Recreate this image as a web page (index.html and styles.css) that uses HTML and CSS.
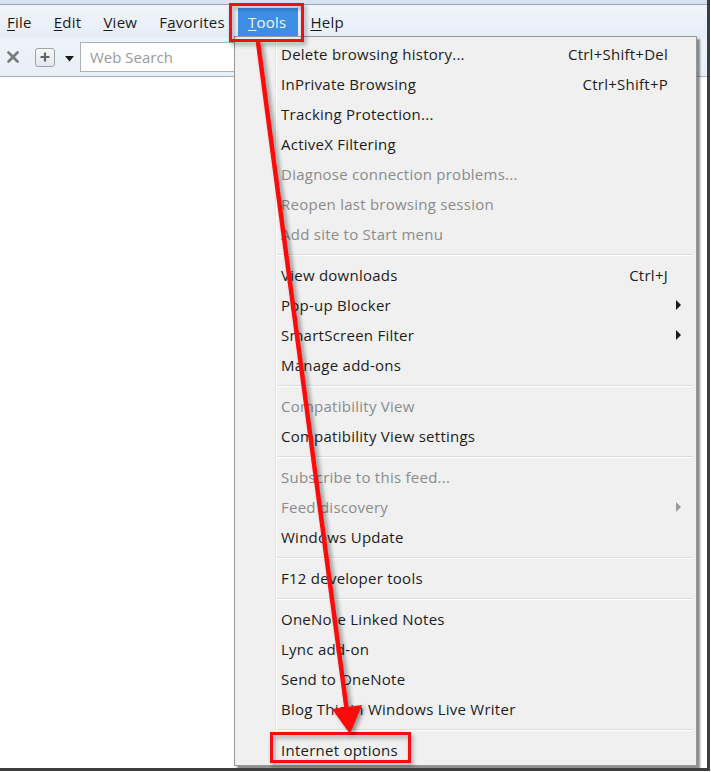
FILE: index.html
```html
<!DOCTYPE html>
<html lang="en">
<head>
<meta charset="utf-8">
<title>Tools menu</title>
<link rel="stylesheet" href="styles.css">
</head>
<body>
<div class="frame">
  <div class="topstrip"></div>
  <div class="menubar">
    <span class="mb-item"><u>F</u>ile</span>
    <span class="mb-item"><u>E</u>dit</span>
    <span class="mb-item"><u>V</u>iew</span>
    <span class="mb-item">F<u>a</u>vorites</span>
    <span class="mb-item active"><u>T</u>ools</span>
    <span class="mb-item"><u>H</u>elp</span>
  </div>
  <div class="toolbar">
    <svg class="tb-x" width="12" height="12" viewBox="0 0 12 12"><path d="M1.5 1.5 L10.5 10.5 M10.5 1.5 L1.5 10.5" stroke="#7a7a7a" stroke-width="2.6" stroke-linecap="round"/></svg>
    <span class="tb-plus"><svg width="12" height="12" viewBox="0 0 12 12"><path d="M6 1.5 V10.5 M1.5 6 H10.5" stroke="#5f6670" stroke-width="2.2"/></svg></span>
    <svg class="tb-drop" width="9" height="6" viewBox="0 0 9 6"><path d="M0 0 H9 L4.5 5.5 Z" fill="#1b1b1b"/></svg>
    <div class="search">Web Search</div>
  </div>
  <div class="content"></div>

  <div class="popup">
    <div class="mi"><span>Delete browsing history...</span><span class="sc">Ctrl+Shift+Del</span></div>
    <div class="mi"><span>InPrivate Browsing</span><span class="sc">Ctrl+Shift+P</span></div>
    <div class="mi"><span>Tracking Protection...</span></div>
    <div class="mi"><span>ActiveX Filtering</span></div>
    <div class="mi dis"><span>Diagnose connection problems...</span></div>
    <div class="mi dis"><span>Reopen last browsing session</span></div>
    <div class="mi dis"><span>Add site to Start menu</span></div>
    <div class="sep"></div>
    <div class="mi"><span>View downloads</span><span class="sc">Ctrl+J</span></div>
    <div class="mi sub"><span>Pop-up Blocker</span></div>
    <div class="mi sub"><span>SmartScreen Filter</span></div>
    <div class="mi"><span>Manage add-ons</span></div>
    <div class="sep"></div>
    <div class="mi dis"><span>Compatibility View</span></div>
    <div class="mi"><span>Compatibility View settings</span></div>
    <div class="sep"></div>
    <div class="mi dis"><span>Subscribe to this feed...</span></div>
    <div class="mi dis sub"><span>Feed discovery</span></div>
    <div class="mi"><span>Windows Update</span></div>
    <div class="sep"></div>
    <div class="mi"><span>F12 developer tools</span></div>
    <div class="sep"></div>
    <div class="mi"><span>OneNote Linked Notes</span></div>
    <div class="mi"><span>Lync add-on</span></div>
    <div class="mi"><span>Send to OneNote</span></div>
    <div class="mi"><span>Blog This in Windows Live Writer</span></div>
    <div class="sep"></div>
    <div class="mi"><span>Internet options</span></div>
  </div>

  <div class="mark mark-tools"></div>
  <div class="mark mark-options"></div>
  <svg class="arrow" width="711" height="772" viewBox="0 0 711 772">
    <line x1="258" y1="42" x2="347" y2="712" stroke="#ff0a0a" stroke-width="4.5"/>
    <polygon points="350,734 362,705 332,709" fill="#ff0a0a"/>
  </svg>
</div>
</body>
</html>
```

FILE: styles.css
```css
html, body {
  margin: 0;
  padding: 0;
  background: #ffffff;
}
body {
  width: 711px;
  height: 772px;
  overflow: hidden;
  font-family: "Open Sans", "Noto Sans", sans-serif;
  font-size: 15px;
  letter-spacing: 0.25px;
  color: #1c1c1c;
}
.frame {
  position: relative;
  width: 707px;
  height: 768px;
  border-right: 3px solid #3d3d3d;
  border-bottom: 3px solid #3d3d3d;
  background: #ffffff;
  display: flex;
  flex-direction: column;
  overflow: hidden;
}
.topstrip {
  height: 4px;
  background: #d9e2ee;
  border-bottom: 1px solid #9aa4b2;
  flex: none;
}
.menubar {
  height: 33px;
  background: linear-gradient(#f1f5fb, #e6edf7);
  display: flex;
  align-items: center;
  padding-left: 0;
  flex: none;
}
.mb-item {
  height: 28px;
  line-height: 28px;
  padding: 0 10px;
  margin-right: 2px;
  color: #1a1a1a;
  letter-spacing: 0.25px;
}
.mb-item:first-child {
  margin-left: -3px;
}
.mb-item u {
  text-decoration-thickness: 1px;
  text-underline-offset: 2px;
}
.mb-item.active {
  background: #3d8ee4;
  color: #f4f8ff;
  margin-left: 1px;
  padding-right: 12px;
}
.toolbar {
  height: 38px;
  background: linear-gradient(#eef3fa, #e9eff7);
  border-bottom: 1px solid #a7b0bc;
  display: flex;
  align-items: center;
  flex: none;
}
.tb-x {
  margin-left: 7px;
}
.tb-plus {
  margin-left: 16px;
  width: 18px;
  height: 17px;
  border: 1px solid #9ea4ac;
  border-radius: 3px;
  background: linear-gradient(#f7f7f7, #e4e6ea);
  display: flex;
  align-items: center;
  justify-content: center;
}
.tb-drop {
  margin-left: 10px;
  margin-top: 3px;
}
.search {
  margin-left: 6px;
  width: 200px;
  height: 30px;
  box-sizing: border-box;
  border: 1px solid #abb0b8;
  background: #ffffff;
  color: #9a9a9a;
  padding-left: 9px;
  line-height: 28px;
  letter-spacing: 0;
}
.content {
  flex: 1;
  background: #ffffff;
}
.popup {
  position: absolute;
  left: 234px;
  top: 36px;
  width: 461px;
  padding-top: 2px;
  border: 1px solid #979797;
  background: #f0f0f0;
  box-shadow: 3px 3px 2px rgba(0, 0, 0, 0.45);
  background-image: linear-gradient(90deg, transparent 40px, #e2e3e3 40px, #e2e3e3 41px, #ffffff 41px, #ffffff 42px, transparent 42px);
}
.mi {
  height: 30px;
  display: flex;
  align-items: center;
  justify-content: space-between;
  padding: 0 28px 0 46px;
  position: relative;
  color: #1c1c1c;
}
.mi.dis {
  color: #8b8b8b;
}
.mi.sub::after {
  content: "";
  position: absolute;
  right: 15px;
  top: 10px;
  border-left: 5px solid #1c1c1c;
  border-top: 5px solid transparent;
  border-bottom: 5px solid transparent;
}
.mi.dis.sub::after {
  border-left-color: #9a9a9a;
}
.sep {
  height: 11px;
  margin: 0 3px 0 42px;
  background: linear-gradient(transparent 5px, #dcdcdc 5px, #dcdcdc 6px, #ffffff 6px, #ffffff 7px, transparent 7px);
}
.mark {
  position: absolute;
  border: 3px solid #f01010;
  box-sizing: border-box;
  filter: drop-shadow(2px 3px 2px rgba(0, 0, 0, 0.35));
}
.mark-tools {
  left: 229px;
  top: 3px;
  width: 75px;
  height: 39px;
}
.mark-options {
  left: 270px;
  top: 732px;
  width: 141px;
  height: 31px;
}
.arrow {
  position: absolute;
  left: 0;
  top: 0;
  pointer-events: none;
  filter: drop-shadow(3px 2px 2px rgba(0, 0, 0, 0.4));
}
```
